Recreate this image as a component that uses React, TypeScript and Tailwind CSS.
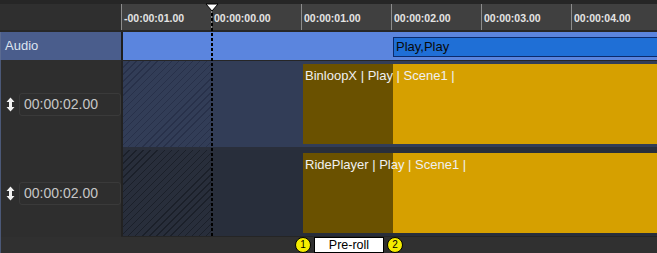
const ticks = ["-00:00:01.00", "00:00:00.00", "00:00:01.00", "00:00:02.00", "00:00:03.00", "00:00:04.00"];

function Marker({ n }: { n: number }) {
  return (
    <div className="flex h-[16px] w-[16px] shrink-0 items-center justify-center rounded-full border border-black bg-[#f4ec00] text-[10px] leading-none text-black">
      {n}
    </div>
  );
}

function ResizeIcon() {
  return (
    <svg width="9" height="15" viewBox="0 0 9 15" className="shrink-0">
      <path d="M4.5 0.5 L8.5 5 L6 5 L6 10 L8.5 10 L4.5 14.5 L0.5 10 L3 10 L3 5 L0.5 5 Z" fill="#f2f2f2" />
    </svg>
  );
}

function TrackRow({
  title,
  bg,
  hatch,
}: {
  title: string;
  bg: string;
  hatch: string;
}) {
  return (
    <div className="flex h-[86px]">
      <div className="flex w-[121px] shrink-0 items-center border-l border-[#4b5877] bg-[#2e2e2e] pl-[5px]">
        <ResizeIcon />
        <div className="ml-[4px] flex h-[23px] flex-1 items-center rounded-[3px] border border-[#3a3a3a] pl-[4px] text-[14px] text-[#c6c6c6]">
          00:00:02.00
        </div>
      </div>
      <div className="w-[2px] shrink-0 bg-[#222]" />
      <div className={`flex min-w-0 flex-1 ${bg}`}>
        <div className={`w-[88px] shrink-0 ${hatch}`} />
        <div className="w-[92px] shrink-0" />
        <div className="flex min-w-0 flex-1 py-[3px]">
          <div className="relative flex-1 bg-[#d6a000]">
            <div className="absolute inset-y-0 left-0 w-[90px] bg-[#6a5100]" />
            <div className="relative whitespace-nowrap pl-[2px] pt-[4px] text-[13px] leading-[16px] text-[#f0f0f0]">{title}</div>
          </div>
        </div>
      </div>
    </div>
  );
}

export default function App() {
  return (
    <div className="relative h-[253px] w-[657px] overflow-hidden bg-[#2e2e2e] font-['Liberation_Sans',Arial,sans-serif]">
      <div className="h-[4px] bg-[#262626]" />
      <div className="flex h-[26px]">
        <div className="w-[121px] shrink-0 bg-[#2f2f2f]" />
        <div className="flex min-w-0 flex-1 bg-[#404040]">
          {ticks.map((t) => (
            <div key={t} className="w-[90px] shrink-0 border-l border-[#8c8c8c] pl-[2px] pt-[8px] text-[10.5px] font-bold leading-[12px] text-[#e4e4e4]">
              {t}
            </div>
          ))}
        </div>
      </div>
      <div className="h-[2px] bg-[#272727]" />
      <div className="flex h-[28px]">
        <div className="flex w-[121px] shrink-0 items-center border-l border-[#5a6a90] bg-[#4a5d8c] pl-[4px] text-[13px] text-[#dde4f0]">
          Audio
        </div>
        <div className="w-[2px] shrink-0 bg-[#1e1e1e]" />
        <div className="flex min-w-0 flex-1 items-center bg-[#5b85de] pt-[2px]">
          <div className="w-[270px] shrink-0" />
          <div className="-mr-[3px] flex h-[20px] flex-1 items-center border border-[#0b2a6c] bg-[#1f6fd6] pl-[2px] text-[13px] text-[#0a0a0a]">
            Play,Play
          </div>
        </div>
      </div>
      <div className="flex h-[1px]">
        <div className="w-[121px] shrink-0 border-l border-[#4b5877] bg-[#2e2e2e]" />
        <div className="flex-1 bg-[#262626]" />
      </div>
      <TrackRow
        title="BinloopX | Play | Scene1 |"
        bg="bg-[#323d57]"
        hatch="bg-[repeating-linear-gradient(135deg,transparent_0_4px,#28314a_4px_5px)]"
      />
      <div className="flex h-[3px]">
        <div className="w-[121px] shrink-0 border-l border-[#4b5877] bg-[#2e2e2e]" />
        <div className="w-[2px] shrink-0 bg-[#222]" />
        <div className="flex-1 bg-[#2a2f3b]" />
      </div>
      <TrackRow
        title="RidePlayer | Play | Scene1 |"
        bg="bg-[#282e3b]"
        hatch="bg-[repeating-linear-gradient(135deg,transparent_0_4px,#1b202a_4px_5px)]"
      />
      <div className="flex h-[1px]">
        <div className="w-[121px] shrink-0 border-l border-[#4b5877] bg-[#2e2e2e]" />
        <div className="flex-1 bg-[#252525]" />
      </div>
      <div className="flex h-[16px] items-center border-l border-[#4b5877] bg-[#303030]">
        <div className="w-[294px] shrink-0" />
        <Marker n={1} />
        <div className="mx-[3px] flex h-[16px] w-[70px] shrink-0 items-center justify-center border border-black bg-white text-[12.5px] text-black">
          Pre-roll
        </div>
        <Marker n={2} />
      </div>

      {/* playhead */}
      <div className="absolute left-[211px] top-[8px] h-[229px] w-[2px] bg-[repeating-linear-gradient(to_bottom,#000_0_3px,transparent_3px_5px)]" />
      <svg className="absolute left-[205px] top-[3px]" width="14" height="9" viewBox="0 0 14 9">
        <polygon points="1,1 13,1 7,8" fill="#fff" stroke="#000" strokeWidth="1" />
      </svg>
    </div>
  );
}
